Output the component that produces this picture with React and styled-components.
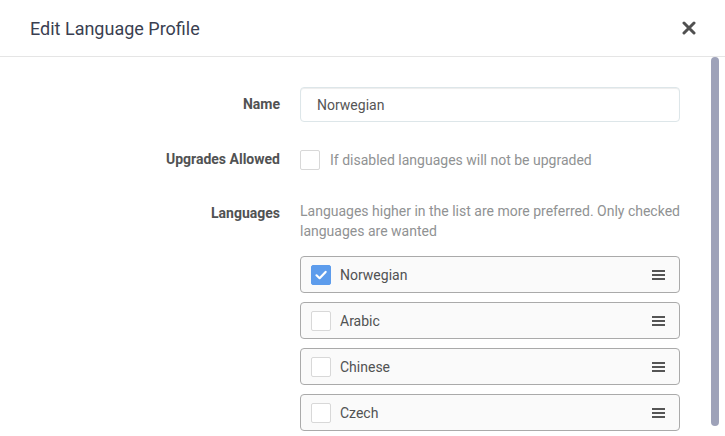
import React, { useState } from 'react';
import styled, { createGlobalStyle } from 'styled-components';

const GlobalStyle = createGlobalStyle`
  html, body { margin: 0; padding: 0; background: #fff; }
  body { font-family: Roboto, "Open Sans", sans-serif; font-size: 14px; color: #515253; }
  * { box-sizing: border-box; }
`;

const Modal = styled.div`
  position: relative;
  width: 725px;
  height: 436px;
  background: #fff;
  overflow: hidden;
`;

const Header = styled.div`
  display: flex;
  align-items: center;
  justify-content: space-between;
  height: 57px;
  padding: 0 28px 0 30px;
  border-bottom: 1px solid #e5e5e5;
`;

const Title = styled.h1`
  margin: 0;
  font-size: 18px;
  font-weight: 400;
  color: #3a3f51;
`;

const CloseButton = styled.button`
  display: flex;
  align-items: center;
  justify-content: center;
  width: 16px;
  height: 16px;
  padding: 0;
  border: 0;
  background: none;
  cursor: pointer;
`;

const Body = styled.div`
  padding: 30px 30px 0 30px;
`;

const FormGroup = styled.div`
  display: flex;
  align-items: ${p => (p.$top ? 'flex-start' : 'center')};
  margin-bottom: 20px;
  min-height: 35px;
`;

const Label = styled.label`
  flex: 0 0 250px;
  margin-right: 20px;
  text-align: right;
  font-weight: 700;
  line-height: ${p => (p.$top ? '33px' : '35px')};
  color: #515253;
`;

const Field = styled.div`
  flex: 0 0 380px;
  display: flex;
  flex-direction: ${p => (p.$column ? 'column' : 'row')};
  align-items: ${p => (p.$column ? 'stretch' : 'center')};
  padding-top: ${p => (p.$column ? '4px' : '0')};
`;

const TextInput = styled.input`
  width: 100%;
  height: 35px;
  padding: 6px 16px;
  border: 1px solid #dde6e9;
  border-radius: 4px;
  box-shadow: inset 0 1px 1px rgba(0, 0, 0, 0.075);
  font-family: inherit;
  font-size: 14px;
  color: #555;
  outline: none;
`;

const Box = styled.span`
  flex: 0 0 20px;
  display: inline-flex;
  align-items: center;
  justify-content: center;
  width: 20px;
  height: 20px;
  border-radius: 2px;
  border: 1px solid ${p => (p.$checked ? '#5d9cec' : '#d8d8d8')};
  background: ${p => (p.$checked ? '#5d9cec' : '#fff')};
  cursor: pointer;
`;

const HelpText = styled.span`
  color: #909293;
  line-height: 20px;
  margin-left: ${p => (p.$inline ? '10px' : '0')};
`;

const List = styled.div`
  display: flex;
  flex-direction: column;
  gap: 9px;
  margin-top: 15px;
`;

const Item = styled.div`
  display: flex;
  align-items: center;
  height: 37px;
  padding: 0 14px 0 10px;
  border: 1px solid #aaa;
  border-radius: 4px;
  background: #fafafa;
`;

const ItemLabel = styled.span`
  flex: 1;
  margin-left: 9px;
  color: #515253;
`;

const ScrollThumb = styled.div`
  position: absolute;
  top: 57px;
  right: 6px;
  width: 8px;
  height: 369px;
  border-radius: 5px;
  background: #9ea2b9;
`;

const Check = () => (
  <svg width="14" height="14" viewBox="0 0 14 14">
    <path d="M2.5 7.3 L5.6 10.2 L11.6 3.9" fill="none" stroke="#fff" strokeWidth="2.2" strokeLinecap="round" strokeLinejoin="round" />
  </svg>
);

const Checkbox = ({ checked, onClick }) => (
  <Box $checked={checked} onClick={onClick}>{checked && <Check />}</Box>
);

const DragIcon = () => (
  <svg width="13" height="12" viewBox="0 0 13 12">
    <rect x="0" y="1" width="13" height="2" fill="#555" />
    <rect x="0" y="5" width="13" height="2" fill="#555" />
    <rect x="0" y="9" width="13" height="2" fill="#555" />
  </svg>
);

const CloseIcon = () => (
  <svg width="14" height="14" viewBox="0 0 14 14">
    <path d="M2 2 L12 12 M12 2 L2 12" stroke="#505050" strokeWidth="3" strokeLinecap="round" />
  </svg>
);

export default function App() {
  const [upgrades, setUpgrades] = useState(false);
  const [languages, setLanguages] = useState([
    { name: 'Norwegian', allowed: true },
    { name: 'Arabic', allowed: false },
    { name: 'Chinese', allowed: false },
    { name: 'Czech', allowed: false },
  ]);

  const toggle = i =>
    setLanguages(ls => ls.map((l, ind) => (ind === i ? { ...l, allowed: !l.allowed } : l)));

  return (
    <>
      <GlobalStyle />
      <Modal>
        <Header>
          <Title>Edit Language Profile</Title>
          <CloseButton aria-label="Close"><CloseIcon /></CloseButton>
        </Header>
        <Body>
          <FormGroup>
            <Label>Name</Label>
            <Field>
              <TextInput defaultValue="Norwegian" />
            </Field>
          </FormGroup>
          <FormGroup>
            <Label>Upgrades Allowed</Label>
            <Field>
              <Checkbox checked={upgrades} onClick={() => setUpgrades(!upgrades)} />
              <HelpText $inline>If disabled languages will not be upgraded</HelpText>
            </Field>
          </FormGroup>
          <FormGroup $top>
            <Label $top>Languages</Label>
            <Field $column>
              <HelpText>Languages higher in the list are more preferred. Only checked languages are wanted</HelpText>
              <List>
                {languages.map((l, ind) => (
                  <Item key={l.name}>
                    <Checkbox checked={l.allowed} onClick={() => toggle(ind)} />
                    <ItemLabel>{l.name}</ItemLabel>
                    <DragIcon />
                  </Item>
                ))}
              </List>
            </Field>
          </FormGroup>
        </Body>
        <ScrollThumb />
      </Modal>
    </>
  );
}
